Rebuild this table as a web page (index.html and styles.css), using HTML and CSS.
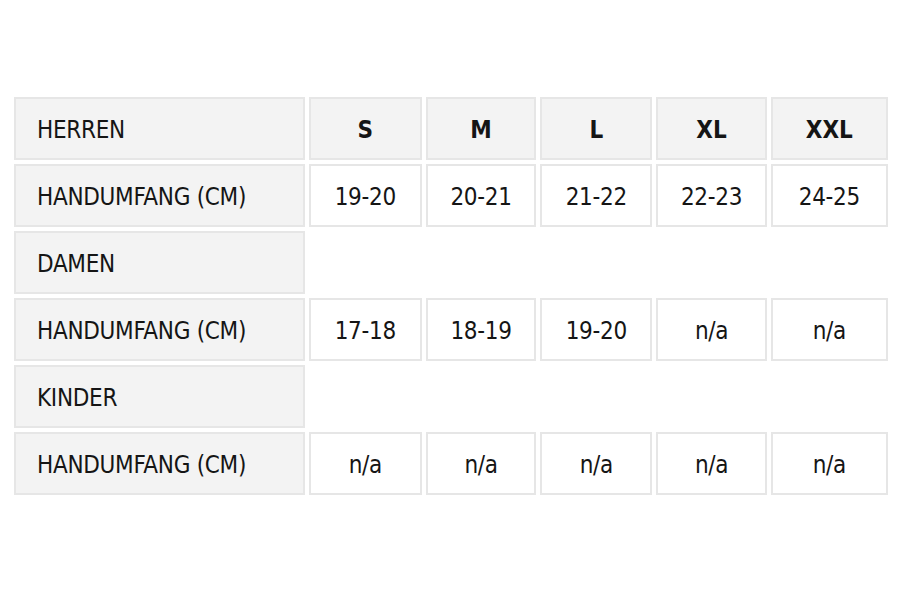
FILE: index.html
```html
<!DOCTYPE html>
<html lang="de">
<head>
<meta charset="utf-8">
<title>Größentabelle</title>
<link rel="stylesheet" href="styles.css">
</head>
<body>
<div class="wrap">
<table class="sizes">
  <colgroup>
    <col class="c-label">
    <col class="c-s">
    <col class="c-m">
    <col class="c-l">
    <col class="c-xl">
    <col class="c-xxl">
  </colgroup>
  <tbody>
    <tr>
      <th class="label">HERREN</th>
      <th class="size">S</th>
      <th class="size">M</th>
      <th class="size">L</th>
      <th class="size">XL</th>
      <th class="size">XXL</th>
    </tr>
    <tr>
      <td class="label">HANDUMFANG (CM)</td>
      <td class="val">19-20</td>
      <td class="val">20-21</td>
      <td class="val">21-22</td>
      <td class="val">22-23</td>
      <td class="val">24-25</td>
    </tr>
    <tr>
      <th class="label">DAMEN</th>
      <td class="blank" colspan="5"></td>
    </tr>
    <tr>
      <td class="label">HANDUMFANG (CM)</td>
      <td class="val">17-18</td>
      <td class="val">18-19</td>
      <td class="val">19-20</td>
      <td class="val">n/a</td>
      <td class="val">n/a</td>
    </tr>
    <tr>
      <th class="label">KINDER</th>
      <td class="blank" colspan="5"></td>
    </tr>
    <tr>
      <td class="label">HANDUMFANG (CM)</td>
      <td class="val">n/a</td>
      <td class="val">n/a</td>
      <td class="val">n/a</td>
      <td class="val">n/a</td>
      <td class="val">n/a</td>
    </tr>
  </tbody>
</table>
</div>
</body>
</html>
```

FILE: styles.css
```css
html, body {
  margin: 0;
  padding: 0;
  background: #ffffff;
}

.wrap {
  padding: 93px 0 0 10px;
}

.sizes {
  border-collapse: separate;
  border-spacing: 4px;
  table-layout: fixed;
  width: 882px;
  font-family: "DejaVu Sans Condensed", "DejaVu Sans", sans-serif;
  font-stretch: condensed;
  font-size: 24px;
  color: #151515;
}

.c-label { width: 290px; }
.c-s { width: 113px; }
.c-m { width: 110px; }
.c-l { width: 112px; }
.c-xl { width: 110px; }
.c-xxl { width: 117px; }

.sizes th,
.sizes td {
  box-sizing: border-box;
  height: 63px;
  padding: 3px 0 0;
  border: 2px solid #e6e6e6;
  font-weight: normal;
  vertical-align: middle;
}

.sizes .label {
  background: #f3f3f3;
  text-align: left;
  padding-left: 21px;
  letter-spacing: -0.3px;
}

.sizes .size {
  background: #f3f3f3;
  text-align: center;
  font-weight: 600;
}

.sizes .val {
  background: #ffffff;
  text-align: center;
  letter-spacing: -0.3px;
}

.sizes .blank {
  border: none;
  background: transparent;
}
```
